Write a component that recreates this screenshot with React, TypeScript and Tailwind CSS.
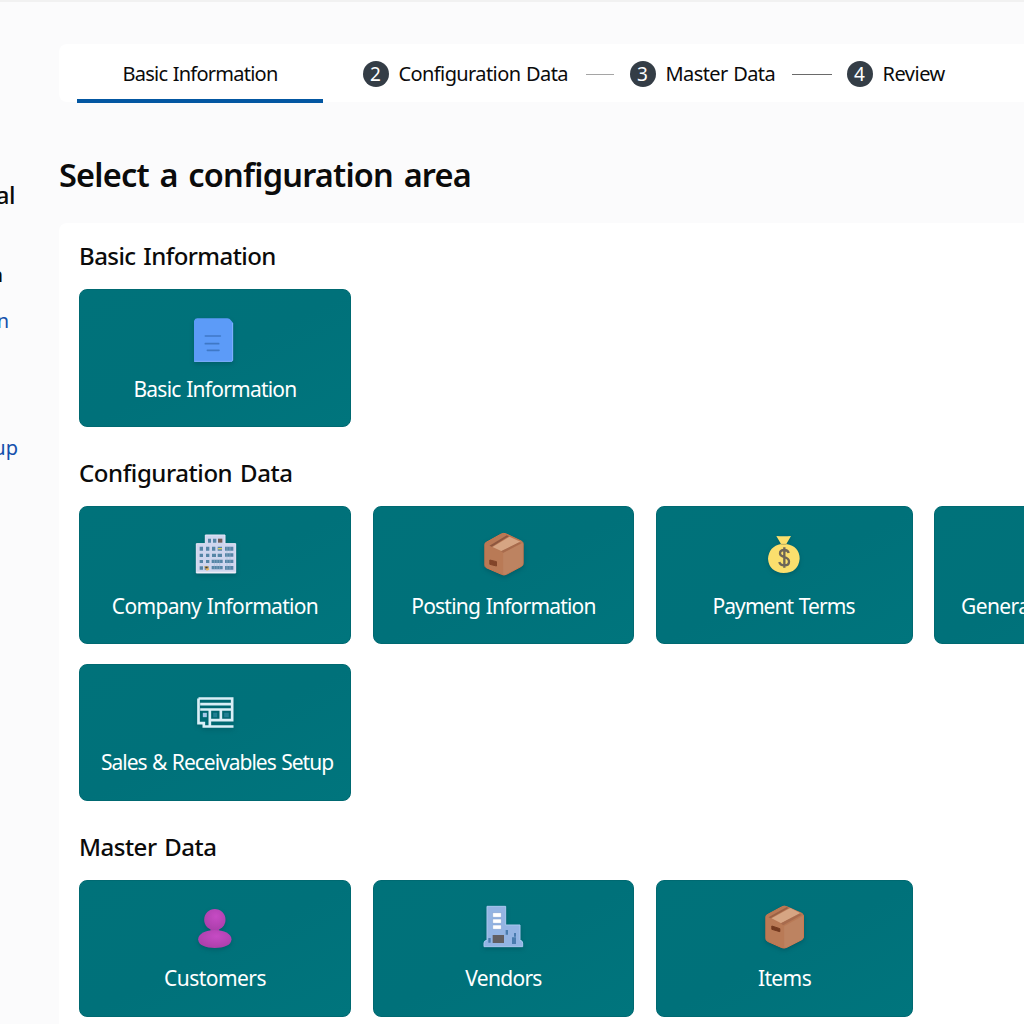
import type { ReactNode } from "react";

function Icon({ box, children }: { box: string; children: ReactNode }) {
  return (
    <svg viewBox={box} className="h-12 w-12 shrink-0 drop-shadow-[0_2px_2px_rgba(0,40,50,0.25)]" aria-hidden="true">
      {children}
    </svg>
  );
}

const DocumentIcon = () => (
  <Icon box="63 45 144 144">
    <path d="M73 61Q75 55 82 55H172Q179 55 182 60L189 68V180Q189 185 184 185H72V64Z" fill="#5c9bf8" />
    <path d="M188 69V181Q187 184 182 184H73" fill="none" stroke="#82b2ff" strokeWidth="3" />
    <path d="M106 108H151M106 131H146M112 151H147" stroke="#3f78c6" strokeWidth="5" strokeLinecap="round" />
  </Icon>
);

const OfficeIcon = () => (
  <Icon box="63 36 144 144">
    <path d="M106 45H165V71H197V159H79V71H106Z" fill="#cfd6ee" stroke="#e6e6f8" strokeWidth="3" strokeLinejoin="round" />
    <path d="M80 157H196" stroke="#f0eef8" strokeWidth="4" />
    <g fill="#5585a6">
      <path d="M114 56H123V68H114ZM129 56H139V68H129Z" />
      <path d="M89 80H99V92H89ZM108 80H118V92H108ZM126 80H136V92H126ZM143 80H156V92H143ZM89 101H99V111H89ZM108 101H118V111H108ZM126 101H138V111H126ZM143 101H156V111H143ZM89 120H99V129H89ZM108 120H118V129H108ZM89 139H99V149H89ZM104 139H116V149H104Z" />
      <path d="M125 119H158V129H125ZM125 138H158V148H125ZM165 80H190V92H165ZM165 100H190V110H165ZM165 119H190V129H165ZM165 138H190V149H165Z" />
    </g>
    <path d="M133 119V148M141 119V148M149 119V148M171 80V149M180 80V149" stroke="#9db9d3" strokeWidth="1.5" />
    <path d="M144 56H157V68H144Z" fill="#705d59" />
    <path d="M144 84H156V88H144Z" fill="#d8cc65" />
    <path d="M102 139L114 139L118 149L110 152Z" fill="#e8b862" />
    <path d="M106 140H113V145H106Z" fill="#373c43" />
  </Icon>
);

const PostingIcon = () => (
  <Icon box="58.5 36 144 144">
    <path d="M73 73Q73 69 77 67L122 42Q130 38 138 42L184 64Q188 67 188 72V131Q188 136 183 139L138 163Q130 167 123 163L77 143Q73 140 73 136Z" fill="#b97a56" stroke="#cc754c" strokeWidth="3" />
    <path d="M128 98L187 69V132Q187 136 182 139L134 164L128 162Z" fill="#bd8361" />
    <path d="M74 71L130 41L187 67L129 98Z" fill="#b87956" />
    <path d="M96 81L147 50L180 65L124 94Z" fill="#d6a583" />
    <path d="M87 77L139 46L145 49L94 80Z" fill="#8d573f" />
    <path d="M121 94L176 67L182 70L128 98Z" fill="#a76b4d" />
    <path d="M88 120L108 125V138L88 133Z" fill="#824529" stroke="#824529" strokeWidth="3" strokeLinejoin="round" />
  </Icon>
);

const ItemsIcon = () => (
  <Icon box="61.5 27 144 144">
    <path d="M76 65Q76 61 80 59L123 36Q131 31 139 35L184 55Q189 58 189 63V126Q189 131 184 134L139 157Q131 161 124 158L81 139Q76 136 76 131Z" fill="#b97a56" stroke="#cc754c" strokeWidth="3" />
    <path d="M131 94L188 62V127Q188 131 184 134L137 158L131 158Z" fill="#bd8361" />
    <path d="M77 64L134 34L187 59L130 92Z" fill="#b87956" />
    <path d="M93 70L149 39L179 54L122 85Z" fill="#d6a583" />
    <path d="M84 67L139 36L144 39L90 70Z" fill="#9a6044" />
    <path d="M121 85L177 56L184 59L128 91Z" fill="#a76b4d" />
    <path d="M94 93L118 101V110L94 103Z" fill="#74391f" stroke="#74391f" strokeWidth="3" strokeLinejoin="round" />
  </Icon>
);

const MoneyIcon = () => (
  <Icon box="63 36 144 144">
    <path d="M112 48Q134 50 156 48L142 72Q181 78 182 116Q178 158 134 159Q90 156 87 116Q90 79 126 72Z" fill="#fbdf6d" />
    <path d="M125 73H143" stroke="#bfae5c" strokeWidth="3" />
    <path d="M149 99Q147 90 136 90Q123 90 123 100Q123 108 136 111Q150 115 150 125Q150 136 136 136Q123 136 121 126M136 82V143" fill="none" stroke="#6d6558" strokeWidth="7" />
  </Icon>
);

const LedgerIcon = () => (
  <Icon box="67.5 22.5 144 144">
    <path d="M84 54H185V119H118M84 54V128H100V138H189M89 71H181M89 87H181M118 90V135M151 90V119" fill="none" stroke="#d9eff7" strokeWidth="8" />
    <path d="M97 97H109V110H97Z" fill="#a6c8e9" />
    <path d="M128 97H140V110H128ZM161 97H175V110H161Z" fill="#237f93" />
  </Icon>
);

const PersonIcon = () => (
  <Icon box="61.5 27 144 144">
    <defs>
      <radialGradient id="person" cx=".55" cy=".35" r=".7">
        <stop offset="0" stopColor="#c64bc4" />
        <stop offset="1" stopColor="#a93ea9" />
      </radialGradient>
    </defs>
    <path d="M120 101H146V112H120Z" fill="#9d3ba3" />
    <circle cx="133" cy="74" r="32" fill="url(#person)" />
    <path d="M83 133C83 116 106 105 133 105S183 116 183 133C183 151 160 159 133 159S83 151 83 133Z" fill="url(#person)" />
  </Icon>
);

const VendorIcon = () => (
  <Icon box="60 27 144 144">
    <path d="M81 34H137V90H180V136Q188 137 188 144V155H72V144Q72 137 81 136Z" fill="#93b4e3" stroke="#a9c8ef" strokeWidth="3" strokeLinejoin="round" />
    <path d="M98 53H124V67H98ZM98 72H124V85H98ZM98 90H124V103H98Z" fill="#fff" stroke="#7899cb" strokeWidth="1.5" />
    <path d="M98 120H132V144H98Z" fill="#625f62" />
    <path d="M85 129H92V143H85ZM137 105H144V119H137ZM162 114H168V125H162ZM156 127H168V147H156Z" fill="#4a7caf" />
  </Icon>
);

type CardProps = { label: string; icon?: ReactNode; size: string; track: string; low?: boolean; start?: boolean };

function Card({ label, icon, size, track, low, start }: CardProps) {
  return (
    <button
      type="button"
      className={`flex shrink-0 flex-col rounded-lg border border-[#006971] bg-linear-to-br from-[#00727a] via-[#00717a] to-[#00757d] text-white ${
        start ? "items-start pl-[26px]" : "items-center"
      } ${low ? "pt-[23px]" : "pt-[25px]"} ${size}`}
    >
      {icon ?? <span className="h-12" />}
      <span className={`mt-3 whitespace-nowrap text-[21px] leading-7 [word-spacing:1px] ${track}`}>{label}</span>
    </button>
  );
}

function Heading({ className, children }: { className: string; children: ReactNode }) {
  return (
    <h2 className={`mb-[18px] h-8 pt-px text-2xl leading-8 font-medium text-[#0b0b0b] [word-spacing:2px] ${className}`}>
      {children}
    </h2>
  );
}

function Step({ n, label, className }: { n: number; label: string; className: string }) {
  return (
    <div className="flex shrink-0 items-center">
      <span className="flex h-[26px] w-[26px] items-center justify-center rounded-full bg-[#343d46] text-[19px] leading-none text-white">
        {n}
      </span>
      <span className={`ml-[10px] whitespace-nowrap ${className}`}>{label}</span>
    </div>
  );
}

export default function App() {
  return (
    <div className="flex h-[1024px] w-[1024px] overflow-hidden border-t-2 border-[#f1f1f1] bg-[#fbfbfc] font-['Noto_Sans','Open_Sans',sans-serif] text-[#0b0b0b]">
      <aside className="flex w-[59px] shrink-0 flex-col items-start pt-[177px] text-xl leading-8 whitespace-nowrap">
        <div className="flex w-[15px] justify-end text-2xl leading-8 font-medium tracking-[-0.5px]">al</div>
        <div className="mt-[48px] flex w-[3px] justify-end font-semibold">a</div>
        <div className="mt-[14px] flex w-[9px] justify-end text-[#1450ac]">n</div>
        <div className="mt-[95px] flex w-[18px] justify-end text-[#1450ac]">up</div>
      </aside>

      <main className="flex min-w-0 grow flex-col pt-[42px]">
        <nav className="flex h-[58px] shrink-0 items-center rounded-l-lg bg-white pl-[18px] text-xl leading-7">
          <div className="relative flex h-full w-[246px] shrink-0 items-center justify-center">
            <span className="pt-0.5 whitespace-nowrap tracking-[-0.75px] [word-spacing:1px]">Basic Information</span>
            <span className="absolute inset-x-0 -bottom-px h-1 bg-[#0357a2]" />
          </div>
          <div className="ml-[39.5px] flex items-center pt-0.5">
            <Step n={2} label="Configuration Data" className="w-[187px] tracking-[-0.6px] [word-spacing:1px]" />
            <span className="mr-4 h-px w-7 bg-[#a5a5a5]" />
            <Step n={3} label="Master Data" className="w-[126px] tracking-[-0.6px] [word-spacing:1px]" />
            <span className="mr-[15px] h-px w-10 bg-[#6a6a6a]" />
            <Step n={4} label="Review" className="tracking-[-0.5px]" />
          </div>
        </nav>

        <h1 className="mt-[52px] h-10 shrink-0 whitespace-nowrap pt-px text-[32.5px] leading-10 font-semibold tracking-[-0.8px] [word-spacing:3px]">
          Select a configuration area
        </h1>

        <section className="mt-[29px] grow rounded-tl-lg bg-white pt-4 pl-5">
          <Heading className="tracking-[-0.56px]">Basic Information</Heading>
          <Card label="Basic Information" icon={<DocumentIcon />} size="h-[138px] w-[272px]" track="tracking-[-0.78px]" />

          <Heading className="mt-[29px] tracking-[-0.42px]">Configuration Data</Heading>
          <div className="flex">
            <Card label="Company Information" icon={<OfficeIcon />} size="h-[138px] w-[272px]" track="tracking-[-0.68px]" />
            <Card label="Posting Information" icon={<PostingIcon />} size="ml-[22px] h-[138px] w-[261px]" track="tracking-[-0.8px]" />
            <Card label="Payment Terms" icon={<MoneyIcon />} size="ml-[22px] h-[138px] w-[257px] pr-0.5" track="tracking-[-0.93px]" />
            <Card label="General" size="ml-[21px] h-[138px] w-[257px]" track="tracking-[-0.6px]" start />
          </div>
          <div className="mt-5 flex">
            <Card label="Sales & Receivables Setup" icon={<LedgerIcon />} size="h-[137px] w-[272px] pl-1" track="tracking-[-1px]" low />
          </div>

          <Heading className="mt-[29px] tracking-[-0.5px]">Master Data</Heading>
          <div className="flex">
            <Card label="Customers" icon={<PersonIcon />} size="h-[137px] w-[272px]" track="tracking-[-0.55px]" low />
            <Card label="Vendors" icon={<VendorIcon />} size="ml-[22px] h-[137px] w-[261px]" track="tracking-[-0.7px]" low />
            <Card label="Items" icon={<ItemsIcon />} size="ml-[22px] h-[137px] w-[257px]" track="tracking-[-0.6px]" low />
          </div>
        </section>
      </main>
    </div>
  );
}
